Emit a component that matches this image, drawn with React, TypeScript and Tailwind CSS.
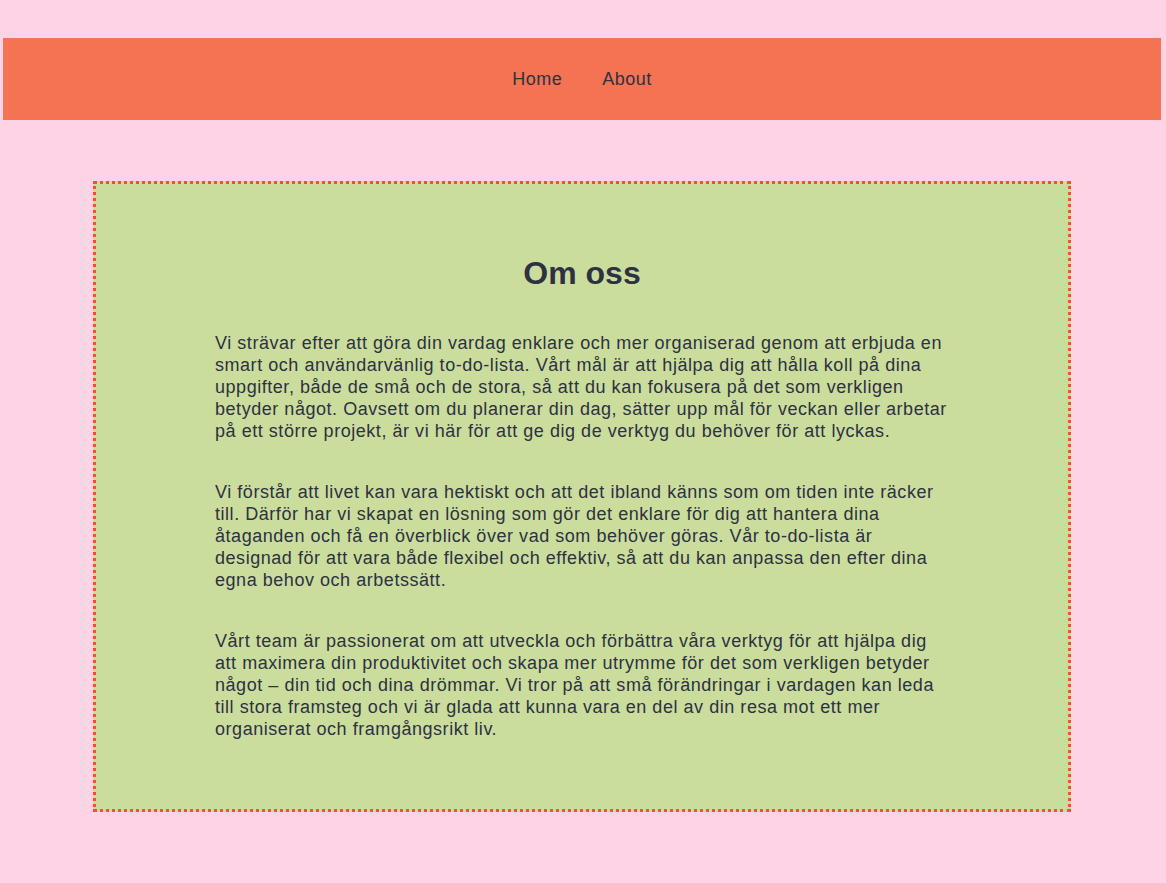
export default function App() {
  return (
    <main
      className="min-h-screen bg-[#ffd3e6] pt-[38px] pb-[72px] text-[#2d3142]"
      style={{ fontFamily: '"Liberation Sans", Arial, sans-serif' }}
    >
      <header className="ml-[3px] mr-[5px] h-[82px] bg-[#f47352] flex items-center justify-center">
        <nav className="flex gap-[40px] text-[18px] tracking-[0.5px]">
          <a href="#" className="text-[#2d3142]">Home</a>
          <a href="#" className="text-[#2d3142]">About</a>
        </nav>
      </header>

      <section className="mt-[61px] mx-[93px] w-[978px] border-[3px] border-dotted border-[#f4502f] bg-[#cbdd9d] pt-[71px] pb-[69px]">
        <div className="w-[734px] mx-auto">
          <h1 className="text-[32px] leading-[37px] font-bold text-center">Om oss</h1>
          <p className="mt-[40px] text-[18px] leading-[22px] tracking-[0.54px]">
            Vi strävar efter att göra din vardag enklare och mer organiserad genom att erbjuda en smart och användarvänlig to-do-lista. Vårt mål är att hjälpa dig att hålla koll på dina uppgifter, både de små och de stora, så att du kan fokusera på det som verkligen betyder något. Oavsett om du planerar din dag, sätter upp mål för veckan eller arbetar på ett större projekt, är vi här för att ge dig de verktyg du behöver för att lyckas.
          </p>
          <p className="mt-[39px] text-[18px] leading-[22px] tracking-[0.54px]">
            Vi förstår att livet kan vara hektiskt och att det ibland känns som om tiden inte räcker till. Därför har vi skapat en lösning som gör det enklare för dig att hantera dina åtaganden och få en överblick över vad som behöver göras. Vår to-do-lista är designad för att vara både flexibel och effektiv, så att du kan anpassa den efter dina egna behov och arbetssätt.
          </p>
          <p className="mt-[39px] text-[18px] leading-[22px] tracking-[0.54px]">
            Vårt team är passionerat om att utveckla och förbättra våra verktyg för att hjälpa dig att maximera din produktivitet och skapa mer utrymme för det som verkligen betyder något – din tid och dina drömmar. Vi tror på att små förändringar i vardagen kan leda till stora framsteg och vi är glada att kunna vara en del av din resa mot ett mer organiserat och framgångsrikt liv.
          </p>
        </div>
      </section>
    </main>
  );
}
